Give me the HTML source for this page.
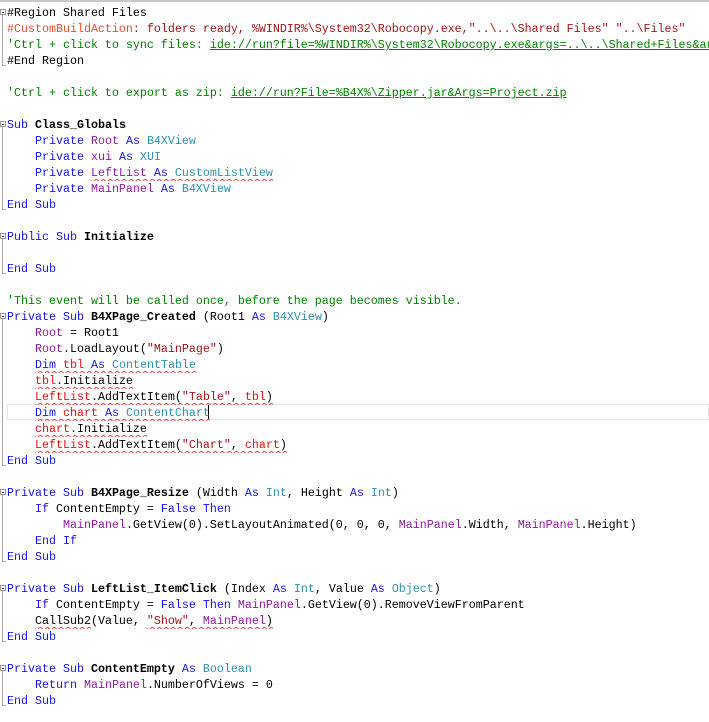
<!DOCTYPE html>
<html><head><meta charset="utf-8"><style>
html,body{margin:0;padding:0;background:#fff;width:709px;height:722px;overflow:hidden}
#top{position:absolute;left:0;top:0;width:709px;height:2px;background:#c8c8c8}
.l{position:absolute;left:7px;right:0;overflow:hidden;margin-top:1px;height:16px;line-height:16px;white-space:pre;font-family:"Liberation Mono",monospace;font-size:11.67px;color:#000}
.k{color:#1515e8}.c{color:#008000}.t{color:#2b91af}.s{color:#a31515}.p{color:#8b1c9c}.r{color:#e81010}.o{color:#e0502a}
.u{text-decoration:underline;text-decoration-color:#008000}
.w{text-decoration:underline wavy #f04040;text-decoration-thickness:1px;text-underline-offset:2px}
b{font-weight:bold}
.fb{position:absolute;left:0;width:6px;height:6px;border:1px solid #999;background:#fff;box-sizing:border-box}
.fb:after{content:"";position:absolute;left:1px;top:2px;width:2px;height:1px;background:#333}
.fl{position:absolute;left:2px;width:1px;background:#aaa}
.fe{position:absolute;left:2px;width:4px;height:1px;background:#aaa}
#cur{position:absolute;left:7px;top:404px;width:702px;height:16px;border:1px solid #e4e4e4;box-sizing:border-box}
#caret{position:absolute;left:208px;top:405px;width:1px;height:14px;background:#000}
</style></head><body>
<div id="top"></div>
<div id="cur"></div><div id="caret"></div>
<div class="fb" style="top:9px"></div><div class="fl" style="top:15px;height:50px"></div><div class="fe" style="top:65px"></div>
<div class="fb" style="top:121px"></div><div class="fl" style="top:127px;height:82px"></div><div class="fe" style="top:209px"></div>
<div class="fb" style="top:233px"></div><div class="fl" style="top:239px;height:34px"></div><div class="fe" style="top:273px"></div>
<div class="fb" style="top:313px"></div><div class="fl" style="top:319px;height:146px"></div><div class="fe" style="top:465px"></div>
<div class="fb" style="top:489px"></div><div class="fl" style="top:495px;height:66px"></div><div class="fe" style="top:561px"></div>
<div class="fb" style="top:585px"></div><div class="fl" style="top:591px;height:50px"></div><div class="fe" style="top:641px"></div>
<div class="fb" style="top:665px"></div><div class="fl" style="top:671px;height:34px"></div><div class="fe" style="top:705px"></div>

<div class="l" style="top:4px">#Region Shared Files</div>
<div class="l" style="top:20px"><span class="o">#CustomBuildAction</span><span class="s">: folders ready, %WINDIR%\System32\Robocopy.exe,"..\..\Shared Files" "..\Files"</span></div>
<div class="l c" style="top:36px">'Ctrl + click to sync files: <span class="u">ide://run?file=%WINDIR%\System32\Robocopy.exe&amp;args=..\..\Shared+Files&amp;args=..\Files</span></div>
<div class="l" style="top:52px">#End Region</div>
<div class="l c" style="top:84px">'Ctrl + click to export as zip: <span class="u">ide://run?File=%B4X%\Zipper.jar&amp;Args=Project.zip</span></div>
<div class="l" style="top:116px"><span class="k">Sub</span> <b>Class_Globals</b></div>
<div class="l" style="top:132px">    <span class="k">Private</span> <span class="p">Root</span> <span class="k">As</span> <span class="t">B4XView</span></div>
<div class="l" style="top:148px">    <span class="k">Private</span> <span class="p">xui</span> <span class="k">As</span> <span class="t">XUI</span></div>
<div class="l" style="top:164px">    <span class="k">Private</span> <span class="w"><span class="p">LeftList</span> <span class="k">As</span> <span class="t">CustomListView</span></span></div>
<div class="l" style="top:180px">    <span class="k">Private</span> <span class="p">MainPanel</span> <span class="k">As</span> <span class="t">B4XView</span></div>
<div class="l k" style="top:196px">End Sub</div>
<div class="l" style="top:228px"><span class="k">Public Sub</span> <b>Initialize</b></div>
<div class="l k" style="top:260px">End Sub</div>
<div class="l c" style="top:292px">'This event will be called once, before the page becomes visible.</div>
<div class="l" style="top:308px"><span class="k">Private Sub</span> <b>B4XPage_Created</b> (Root1 <span class="k">As</span> <span class="t">B4XView</span>)</div>
<div class="l" style="top:324px">    <span class="p">Root</span> = Root1</div>
<div class="l" style="top:340px">    <span class="p">Root</span>.LoadLayout(<span class="s">"MainPage"</span>)</div>
<div class="l" style="top:356px">    <span class="w"><span class="k">Dim</span> <span class="r">tbl</span> <span class="k">As</span> <span class="t">ContentTable</span></span></div>
<div class="l" style="top:372px">    <span class="w"><span class="r">tbl</span>.Initialize</span></div>
<div class="l" style="top:388px">    <span class="w"><span class="r">LeftList</span>.AddTextItem(<span class="s">"Table"</span>, <span class="r">tbl</span>)</span></div>
<div class="l" style="top:404px">    <span class="w"><span class="k">Dim</span> <span class="r">chart</span> <span class="k">As</span> <span class="t">ContentChart</span></span></div>
<div class="l" style="top:420px">    <span class="w"><span class="r">chart</span>.Initialize</span></div>
<div class="l" style="top:436px">    <span class="w"><span class="r">LeftList</span>.AddTextItem(<span class="s">"Chart"</span>, <span class="r">chart</span>)</span></div>
<div class="l k" style="top:452px">End Sub</div>
<div class="l" style="top:484px"><span class="k">Private Sub</span> <b>B4XPage_Resize</b> (Width <span class="k">As</span> <span class="t">Int</span>, Height <span class="k">As</span> <span class="t">Int</span>)</div>
<div class="l" style="top:500px">    <span class="k">If</span> ContentEmpty = <span class="k">False</span> <span class="k">Then</span></div>
<div class="l" style="top:516px">        <span class="p">MainPanel</span>.GetView(0).SetLayoutAnimated(0, 0, 0, <span class="p">MainPanel</span>.Width, <span class="p">MainPanel</span>.Height)</div>
<div class="l k" style="top:532px">    End If</div>
<div class="l k" style="top:548px">End Sub</div>
<div class="l" style="top:580px"><span class="k">Private Sub</span> <b>LeftList_ItemClick</b> (Index <span class="k">As</span> <span class="t">Int</span>, Value <span class="k">As</span> <span class="t">Object</span>)</div>
<div class="l" style="top:596px">    <span class="k">If</span> ContentEmpty = <span class="k">False</span> <span class="k">Then</span> <span class="p">MainPanel</span>.GetView(0).RemoveViewFromParent</div>
<div class="l" style="top:612px">    <span class="w">CallSub2</span>(Value, <span class="w"><span class="s">"Show"</span>, <span class="p">MainPanel</span>)</span></div>
<div class="l k" style="top:628px">End Sub</div>
<div class="l" style="top:660px"><span class="k">Private Sub</span> <b>ContentEmpty</b> <span class="k">As</span> <span class="t">Boolean</span></div>
<div class="l" style="top:676px">    <span class="k">Return</span> <span class="p">MainPanel</span>.NumberOfViews = 0</div>
<div class="l k" style="top:692px">End Sub</div>
</body></html>
